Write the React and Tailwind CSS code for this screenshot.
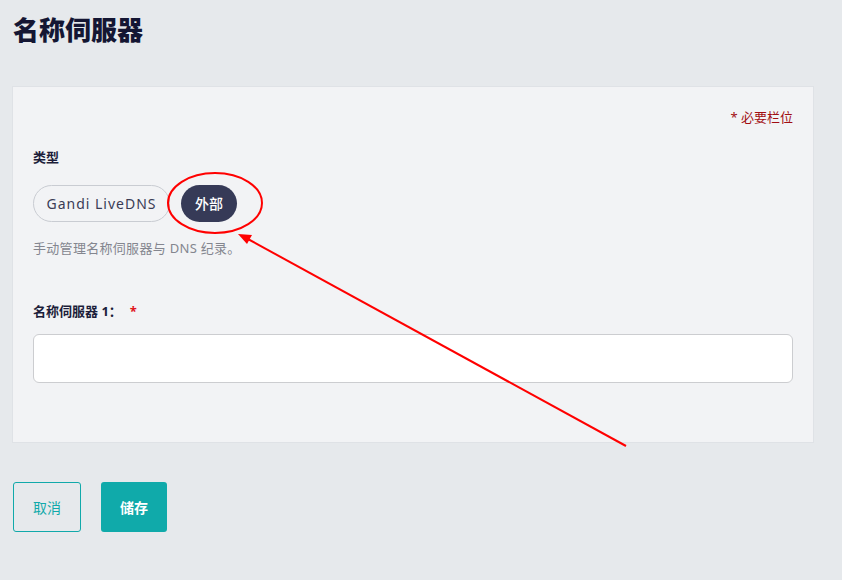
export default function App() {
  return (
    <div
      className="relative min-h-[580px] w-[842px] bg-[#e6e9ec] px-3 pt-[13px] text-[#1c1d3a]"
      style={{ fontFamily: '"Noto Sans", "Noto Sans CJK SC", sans-serif' }}
    >
      <h1 className="pl-[1px] text-[26px] font-extrabold leading-[34px] text-[#141633]">名称伺服器</h1>

      {/* Card */}
      <div className="mt-[39px] h-[357px] w-[802px] border border-[#dfe2e6] bg-[#f2f3f5] pl-5 pr-[20px] pt-[20px]">
        <div className="flex justify-end text-[13px] leading-[20px] text-[#a10d12]">* 必要栏位</div>

        <div className="mt-[20px] text-[13px] font-bold leading-[20px]">类型</div>

        <div className="mt-[18px] flex items-center gap-[11px]">
          <button className="h-[37px] w-[137px] rounded-full border border-[#c9ccd2] bg-[#f2f3f5] text-[14px] font-normal tracking-[1px] text-[#3a3c55]">
            Gandi LiveDNS
          </button>
          <button className="h-[37px] w-[56px] rounded-full bg-[#363a57] text-[14px] font-medium text-white">
            外部
          </button>
        </div>

        <p className="mt-[16px] text-[13px] leading-[20px] tracking-[0.3px] text-[#84868f]">手动管理名称伺服器与 DNS 纪录。</p>

        <div className="mt-[43px] flex items-center text-[13px] font-bold leading-[20px]">
          名称伺服器 1：
          <span className="ml-[8px] text-[#e0141c]">*</span>
        </div>

        <input className="mt-[13px] h-[49px] w-[760px] rounded-[6px] border border-[#cccdd0] bg-white outline-none" />
      </div>

      {/* Buttons */}
      <div className="mt-[39px] flex gap-5 pl-[1px]">
        <button className="h-[50px] w-[68px] rounded-[3px] border border-[#11a9aa] text-[14px] text-[#11a9aa]">取消</button>
        <button className="h-[50px] w-[66px] rounded-[3px] bg-[#10aaaa] text-[14px] font-bold text-white">储存</button>
      </div>

      {/* Annotation */}
      <svg className="pointer-events-none absolute left-0 top-0" width="842" height="580">
        <ellipse cx="215" cy="203" rx="47" ry="30" fill="none" stroke="#f00" strokeWidth="2" />
        <line x1="626" y1="446" x2="246" y2="238" stroke="#f00" strokeWidth="2" />
        <polygon points="238,234 252,235 247,244" fill="#f00" />
      </svg>
    </div>
  );
}
